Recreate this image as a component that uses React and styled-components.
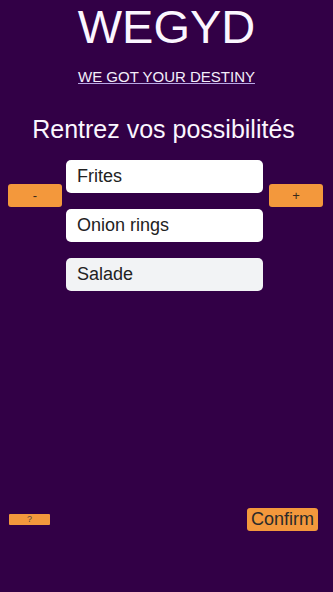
import React from "react";
import styled, { createGlobalStyle } from "styled-components";

const Global = createGlobalStyle`
  html, body { margin: 0; padding: 0; background: #320046; }
  body { font-family: "Liberation Sans", Arial, sans-serif; }
  * { box-sizing: border-box; }
`;

const Page = styled.div`
  width: 333px;
  height: 592px;
  background: #320046;
  display: flex;
  flex-direction: column;
  padding: 0 8px;
  color: #fff;
`;

const Title = styled.h1`
  margin: 0;
  padding-top: 1px;
  font-size: 47px;
  font-weight: 400;
  line-height: 52px;
  text-align: center;
  color: #fbf6ff;
`;

const Tagline = styled.a`
  align-self: center;
  margin-top: 15px;
  font-size: 15px;
  line-height: 17px;
  color: #f4eefa;
  text-decoration: underline;
  text-decoration-color: #b9a8e6;
`;

const Heading = styled.h2`
  margin: 30px 0 0;
  padding-right: 6px;
  font-size: 25px;
  font-weight: 400;
  line-height: 29px;
  text-align: center;
  color: #fbf6ff;
`;

const Editor = styled.div`
  display: flex;
  align-items: flex-start;
  margin-top: 16px;
`;

const SideButton = styled.button`
  width: 54px;
  height: 23px;
  margin-top: 24px;
  margin-left: ${(p) => p.$ml || 0}px;
  border: none;
  border-radius: 3px;
  background: #f3983c;
  color: #3a2a1a;
  font-family: "Liberation Sans", Arial, sans-serif;
  font-size: 13px;
  padding: 0;
`;

const Fields = styled.div`
  display: flex;
  flex-direction: column;
  gap: 16px;
  width: 197px;
  margin-left: 4px;
`;

const Field = styled.input`
  height: 33px;
  width: 100%;
  border: none;
  border-radius: 5px;
  padding: 0 11px;
  background: ${(p) => (p.$muted ? "#f2f3f5" : "#ffffff")};
  color: #222;
  font-family: "Liberation Sans", Arial, sans-serif;
  font-size: 18px;
  outline: none;
`;

const Spacer = styled.div`
  flex: 1;
`;

const Footer = styled.div`
  display: flex;
  justify-content: space-between;
  align-items: center;
  padding: 0 7px 0 1px;
  margin-bottom: 61px;
`;

const HelpButton = styled.button`
  width: 41px;
  height: 11px;
  border: none;
  border-radius: 1px;
  padding: 0;
  margin-top: -1px;
  background: #f3983c;
  color: #5a4a3a;
  font-family: "Liberation Sans", Arial, sans-serif;
  font-size: 9px;
  line-height: 11px;
`;

const ConfirmButton = styled.button`
  height: 23px;
  padding: 0 4px;
  border: none;
  border-radius: 3px;
  background: #f3983c;
  color: #2a2a2a;
  font-family: "Liberation Sans", Arial, sans-serif;
  font-size: 18px;
  line-height: 23px;
`;

export default function App() {
  return (
    <>
      <Global />
      <Page>
        <Title>WEGYD</Title>
        <Tagline href="#">WE GOT YOUR DESTINY</Tagline>
        <Heading>Rentrez vos possibilités</Heading>
        <Editor>
          <SideButton>-</SideButton>
          <Fields>
            <Field defaultValue="Frites" />
            <Field defaultValue="Onion rings" />
            <Field defaultValue="Salade" $muted />
          </Fields>
          <SideButton $ml={6}>+</SideButton>
        </Editor>
        <Spacer />
        <Footer>
          <HelpButton>?</HelpButton>
          <ConfirmButton>Confirm</ConfirmButton>
        </Footer>
      </Page>
    </>
  );
}
